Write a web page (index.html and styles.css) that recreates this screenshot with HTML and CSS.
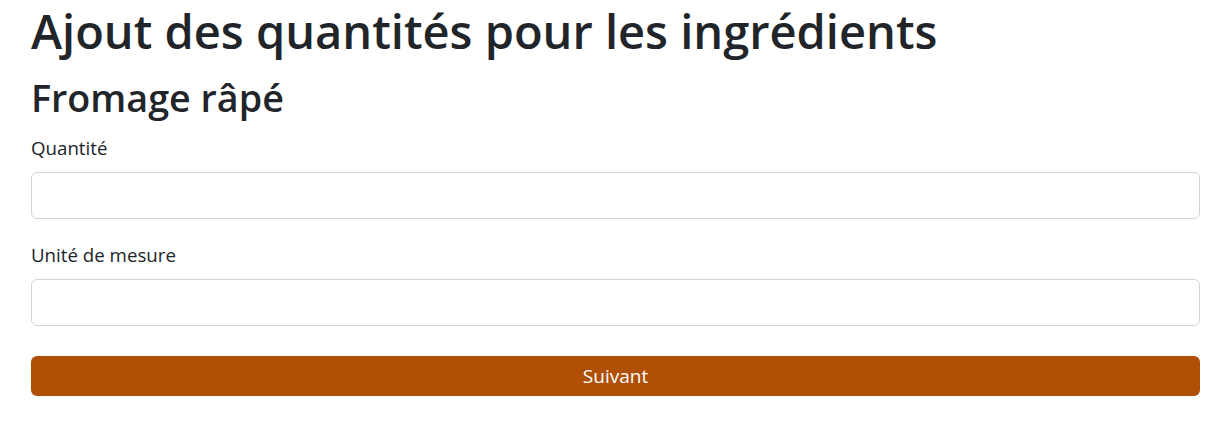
FILE: index.html
```html
<!DOCTYPE html>
<html lang="fr">
<head>
<meta charset="utf-8">
<title>Ajout des quantités</title>
<link rel="stylesheet" href="styles.css">
</head>
<body>
<main class="container">
  <h1 class="title">Ajout des quantités pour les ingrédients</h1>
  <h3 class="subtitle">Fromage râpé</h3>
  <form class="form">
    <div class="field">
      <label class="label" for="q">Quantité</label>
      <input class="input" id="q" type="text">
    </div>
    <div class="field">
      <label class="label" for="u">Unité de mesure</label>
      <input class="input" id="u" type="text">
    </div>
    <button class="btn" type="button">Suivant</button>
  </form>
</main>
</body>
</html>
```
FILE: styles.css
```css
html, body {
  margin: 0;
  padding: 0;
  background: #fff;
}
body {
  font-family: "Open Sans", "Noto Sans", sans-serif;
  color: #212529;
}
.container {
  padding: 2px 25px 0 31px;
}
.title {
  margin: 0 0 16px 0;
  font-size: 47px;
  line-height: 58px;
  font-weight: 600;
}
.subtitle {
  margin: 0 0 15px 0;
  font-size: 37.7px;
  line-height: 44px;
  font-weight: 600;
}
.form {
  display: flex;
  flex-direction: column;
}
.field {
  display: flex;
  flex-direction: column;
  margin-bottom: 23px;
}
.field + .field {
  margin-bottom: 30px;
}
.label {
  font-size: 18.7px;
  line-height: 26px;
  margin-bottom: 11px;
}
.input {
  box-sizing: border-box;
  height: 47px;
  width: 100%;
  border: 1px solid #d2d4db;
  border-radius: 6px;
  padding: 0 15px;
  font: inherit;
  font-size: 20px;
  background: #fff;
}
.btn {
  box-sizing: border-box;
  height: 40px;
  width: 100%;
  border: none;
  border-radius: 6px;
  background: #b05006;
  color: #fff;
  font-family: inherit;
  font-size: 19px;
  line-height: 26px;
  padding: 0;
}
```
